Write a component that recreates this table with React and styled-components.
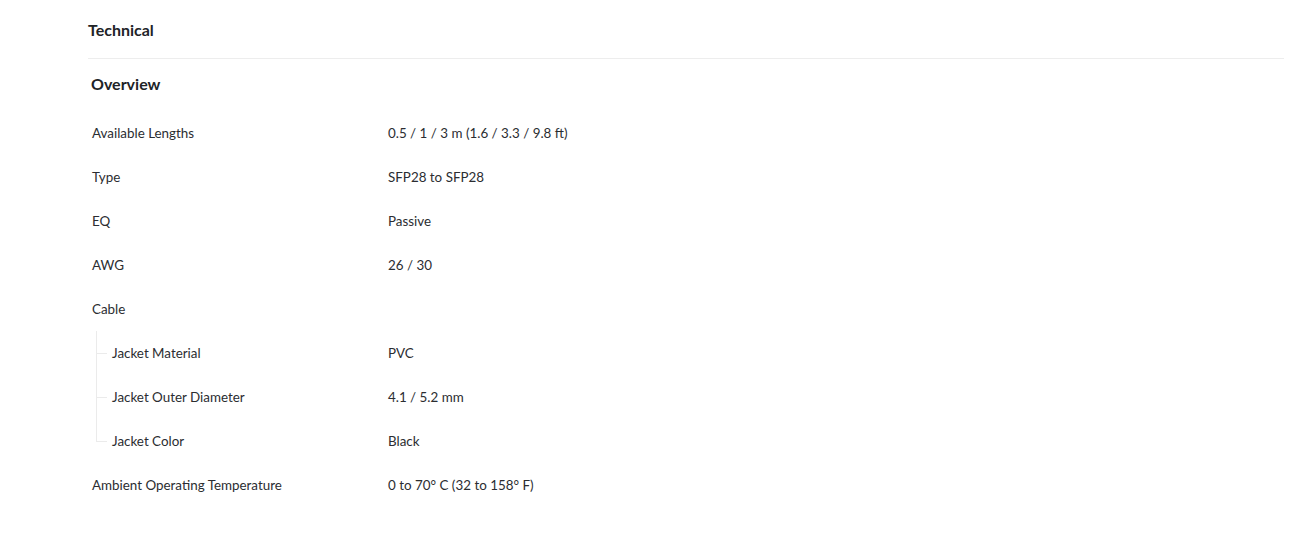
import React from "react";
import styled, { createGlobalStyle } from "styled-components";

const Global = createGlobalStyle`
  html, body { margin: 0; padding: 0; background: #ffffff; }
  body { font-family: Lato, "Noto Sans", sans-serif; color: #212327; }
`;

const Page = styled.div`
  padding: 0 21px 0 88px;
`;

const Header = styled.div`
  padding: 20px 0 18px;
  border-bottom: 1px solid #ededed;
`;

const Title = styled.h2`
  margin: 0;
  font-size: 16px;
  line-height: 20px;
  font-weight: 700;
  color: #212327;
`;

const Section = styled.section`
  padding: 15px 0 0 3px;
`;

const SectionTitle = styled(Title)`
  margin-bottom: 17px;
`;

const Table = styled.div`
  display: flex;
  flex-direction: column;
`;

const Row = styled.div`
  display: grid;
  grid-template-columns: 296px 1fr;
  height: 44px;
  align-items: center;
  padding-left: 1px;
  font-size: 13.4px;
  color: #2b2d31;
`;

const Label = styled.div`
  position: relative;
  height: 44px;
  display: flex;
  align-items: center;
  padding-left: ${(p) => (p.$nested ? "20px" : "0")};

  ${(p) =>
    p.$nested &&
    `
    &::before {
      content: "";
      position: absolute;
      left: 4px;
      top: 0;
      width: 1px;
      height: ${p.$last ? "22px" : "44px"};
      background: #ebebeb;
    }
    &::after {
      content: "";
      position: absolute;
      left: 4px;
      top: 22px;
      width: 11px;
      height: 1px;
      background: #ebebeb;
    }
  `}
`;

const Value = styled.div``;

const rows = [
  { label: "Available Lengths", value: "0.5 / 1 / 3 m (1.6 / 3.3 / 9.8 ft)" },
  { label: "Type", value: "SFP28 to SFP28" },
  { label: "EQ", value: "Passive" },
  { label: "AWG", value: "26 / 30" },
  { label: "Cable", value: "" },
  { label: "Jacket Material", value: "PVC", nested: true },
  { label: "Jacket Outer Diameter", value: "4.1 / 5.2 mm", nested: true },
  { label: "Jacket Color", value: "Black", nested: true, last: true },
  { label: "Ambient Operating Temperature", value: "0 to 70° C (32 to 158° F)" },
];

export default function App() {
  return (
    <>
      <Global />
      <Page>
        <Header>
          <Title>Technical</Title>
        </Header>
        <Section>
          <SectionTitle>Overview</SectionTitle>
          <Table>
            {rows.map((r) => (
              <Row key={r.label}>
                <Label $nested={r.nested} $last={r.last}>
                  {r.label}
                </Label>
                <Value>{r.value}</Value>
              </Row>
            ))}
          </Table>
        </Section>
      </Page>
    </>
  );
}
